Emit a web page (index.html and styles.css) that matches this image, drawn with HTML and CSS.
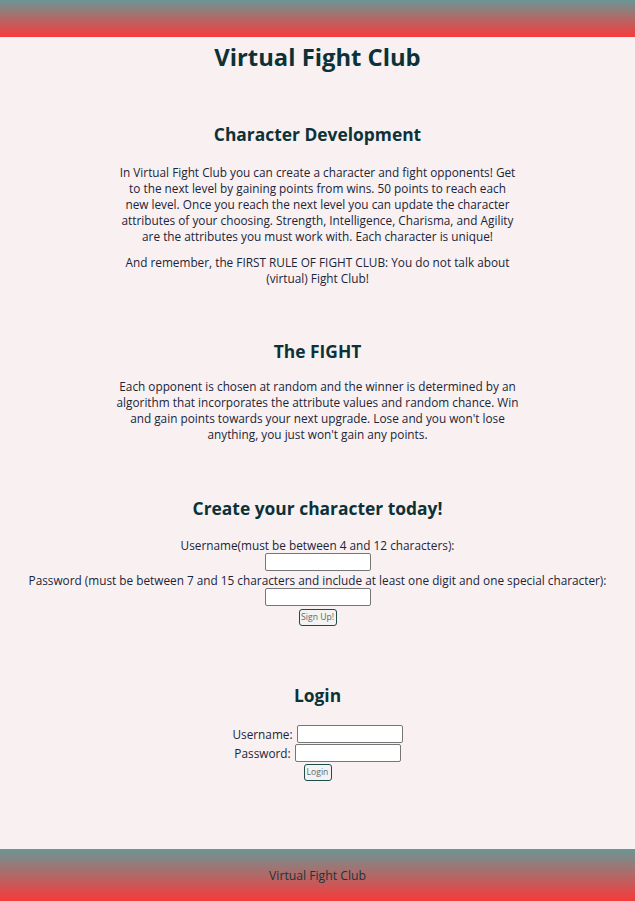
FILE: index.html
```html
<!DOCTYPE html>
<html lang="en">
<head>
<meta charset="utf-8">
<title>Virtual Fight Club</title>
<link rel="stylesheet" href="styles.css">
</head>
<body>
<header class="top-bar"></header>
<main class="content">
  <h1 class="site-title">Virtual Fight Club</h1>

  <section class="section section-dev">
    <h2 class="section-title">Character Development</h2>
    <p class="text">In Virtual Fight Club you can create a character and fight opponents! Get to the next level by gaining points from wins. 50 points to reach each new level. Once you reach the next level you can update the character attributes of your choosing. Strength, Intelligence, Charisma, and Agility are the attributes you must work with. Each character is unique!</p>
    <p class="text text-second">And remember, the FIRST RULE OF FIGHT CLUB: You do not talk about (virtual) Fight Club!</p>
  </section>

  <section class="section section-fight">
    <h2 class="section-title">The FIGHT</h2>
    <p class="text text-fight">Each opponent is chosen at random and the winner is determined by an algorithm that incorporates the attribute values and random chance. Win and gain points towards your next upgrade. Lose and you won't lose anything, you just won't gain any points.</p>
  </section>

  <section class="section section-create">
    <h2 class="section-title">Create your character today!</h2>
    <form class="signup-form">
      <label class="form-label" for="su-user">Username(must be between 4 and 12 characters):</label>
      <input class="field" id="su-user" type="text">
      <label class="form-label" for="su-pass">Password (must be between 7 and 15 characters and include at least one digit and one special character):</label>
      <input class="field" id="su-pass" type="password">
      <button class="btn btn-signup" type="button">Sign Up!</button>
    </form>
  </section>

  <section class="section section-login">
    <h2 class="section-title">Login</h2>
    <form class="login-form">
      <div class="login-row"><label class="form-label" for="li-user">Username:</label> <input class="field" id="li-user" type="text"></div>
      <div class="login-row"><label class="form-label" for="li-pass">Password:</label> <input class="field" id="li-pass" type="password"></div>
      <button class="btn btn-login" type="button">Login</button>
    </form>
  </section>
</main>
<footer class="bottom-bar">
  <span class="footer-text">Virtual Fight Club</span>
</footer>
</body>
</html>
```

FILE: styles.css
```css
html, body {
  margin: 0;
  padding: 0;
}

body {
  background: #f9f0f1;
  font-family: "Open Sans", "Noto Sans", sans-serif;
  font-size: 11.8px;
  color: #1a2638;
  min-height: 901px;
  display: flex;
  flex-direction: column;
}

.top-bar {
  height: 37px;
  background: linear-gradient(#6b9794, #f73a3a);
}

.content {
  flex: 1;
  text-align: center;
}

.site-title {
  margin: 4px 0 0;
  font-size: 23.8px;
  line-height: 32px;
  font-weight: 700;
  color: #0c3238;
}

.section-title {
  margin: 0;
  font-size: 17.4px;
  line-height: 24px;
  font-weight: 700;
  color: #0c3238;
}

.section-dev {
  margin-top: 49px;
}

.section-fight {
  margin-top: 53px;
}

.section-create {
  margin-top: 54px;
}

.section-login {
  margin-top: 57px;
}

.text {
  max-width: 400px;
  margin: 18px auto 0;
  line-height: 16px;
}

.text-second {
  margin-top: 10px;
}

.text-fight {
  max-width: 416px;
  margin-top: 15px;
}

.signup-form {
  margin-top: 17px;
  display: flex;
  flex-direction: column;
  align-items: center;
}

.form-label {
  line-height: 16px;
  white-space: nowrap;
}

.field {
  box-sizing: border-box;
  width: 106px;
  height: 18px;
  margin: 0;
  padding: 0 2px;
  border: 1px solid #767676;
  border-radius: 2px;
  background: #fff;
  font: inherit;
}

.signup-form .field {
  margin-bottom: 1px;
}

.btn {
  box-sizing: border-box;
  height: 17px;
  margin-top: 2px;
  padding: 0;
  border: 1px solid #1f4a4a;
  border-radius: 3px;
  background: #f3f3f3;
  color: #666;
  font-family: "Open Sans", "Noto Sans", sans-serif;
  font-size: 8.6px;
  line-height: 15px;
  white-space: nowrap;
  cursor: pointer;
}

.btn-signup {
  width: 38px;
}

.btn-login {
  width: 28px;
  margin-top: 2px;
}

.login-form {
  margin-top: 17px;
  display: flex;
  flex-direction: column;
  align-items: center;
}

.login-row {
  display: flex;
  align-items: center;
  gap: 4px;
  height: 19px;
}

.bottom-bar {
  height: 52px;
  background: linear-gradient(#6b9794, #f73a3a);
  display: flex;
  align-items: center;
  justify-content: center;
}

.footer-text {
  font-size: 12.2px;
  color: #173638;
}
```
